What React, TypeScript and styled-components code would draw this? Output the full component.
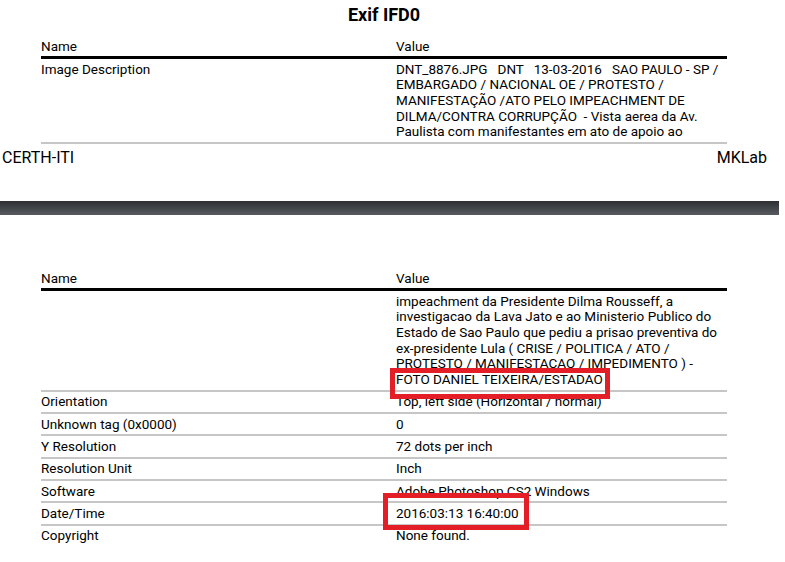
import styled, { createGlobalStyle } from 'styled-components';

const GlobalStyle = createGlobalStyle`
  html, body {
    margin: 0;
    padding: 0;
    background: #ffffff;
  }
  body {
    font-family: Roboto, 'Noto Sans', Arial, sans-serif;
    color: #000;
  }
`;

type Row = { name: string; value: string[] };

const pageOneRows: Row[] = [
  {
    name: 'Image Description',
    value: [
      'DNT_8876.JPG   DNT   13-03-2016   SAO PAULO - SP /',
      'EMBARGADO / NACIONAL OE / PROTESTO /',
      'MANIFESTAÇÃO /ATO PELO IMPEACHMENT DE',
      'DILMA/CONTRA CORRUPÇÃO  - Vista aerea da Av.',
      'Paulista com manifestantes em ato de apoio ao',
    ],
  },
];

const pageTwoRows: Row[] = [
  {
    name: '',
    value: [
      'impeachment da Presidente Dilma Rousseff, a',
      'investigacao da Lava Jato e ao Ministerio Publico do',
      'Estado de Sao Paulo que pediu a prisao preventiva do',
      'ex-presidente Lula ( CRISE / POLITICA / ATO /',
      'PROTESTO / MANIFESTACAO / IMPEDIMENTO ) -',
      'FOTO DANIEL TEIXEIRA/ESTADAO',
    ],
  },
  { name: 'Orientation', value: ['Top, left side (Horizontal / normal)'] },
  { name: 'Unknown tag (0x0000)', value: ['0'] },
  { name: 'Y Resolution', value: ['72 dots per inch'] },
  { name: 'Resolution Unit', value: ['Inch'] },
  { name: 'Software', value: ['Adobe Photoshop CS2 Windows'] },
  { name: 'Date/Time', value: ['2016:03:13 16:40:00'] },
  { name: 'Copyright', value: ['None found.'] },
];

// red annotation boxes, coordinates relative to the second page
const marks = [
  { x: 390, y: 153, w: 220, h: 31 },
  { x: 383, y: 278, w: 146, h: 37 },
];

const ExifTable = ({ rows, top }: { rows: Row[]; top: number }) => (
  <Table $top={top}>
    <TableRow $head>
      <NameCell>Name</NameCell>
      <ValueCell>Value</ValueCell>
    </TableRow>
    {rows.map((row, i) => (
      <TableRow key={i} $last={i === rows.length - 1 && rows.length > 1}>
        <NameCell>{row.name}</NameCell>
        <ValueCell>
          {row.value.map((line, j) => (
            <Line key={j}>{line}</Line>
          ))}
        </ValueCell>
      </TableRow>
    ))}
  </Table>
);

const App = () => {
  return (
    <Viewer>
      <GlobalStyle />
      <PageOne>
        <Title>Exif IFD0</Title>
        <ExifTable rows={pageOneRows} top={13} />
        <Footer>
          <span>CERTH-ITI</span>
          <span>MKLab</span>
        </Footer>
      </PageOne>
      <PageGap />
      <PageTwo>
        <ExifTable rows={pageTwoRows} top={55.6} />
        {marks.map((m, i) => (
          <Mark key={i} $x={m.x} $y={m.y} $w={m.w} $h={m.h} />
        ))}
      </PageTwo>
    </Viewer>
  );
};

const Viewer = styled.div`
  width: 785px;
  height: 562px;
  overflow: hidden;
  background: #fff;
`;

const PageOne = styled.div`
  height: 201px;
  overflow: hidden;
  display: flex;
  flex-direction: column;
`;

const Title = styled.div`
  width: 686px;
  margin: 4px 0 0 41px;
  text-align: center;
  font-size: 18px;
  line-height: 21.6px;
  font-weight: 700;
  color: #000;
`;

const Table = styled.div<{ $top: number }>`
  width: 686px;
  margin: ${(p) => p.$top}px 0 0 41px;
  display: flex;
  flex-direction: column;
  font-size: 13.5px;
  line-height: 15.6px;
`;

const TableRow = styled.div<{ $head?: boolean; $last?: boolean }>`
  display: flex;
  padding: ${(p) => (p.$head ? '0 0 2px' : '2.6px 0 2.2px')};
  border-bottom: ${(p) =>
    p.$head ? '3px solid #000' : p.$last ? 'none' : '2px solid #c6c6c6'};
`;

const NameCell = styled.div`
  width: 355px;
  flex-shrink: 0;
  white-space: pre;
`;

const ValueCell = styled.div`
  flex: 1;
  display: flex;
  flex-direction: column;
`;

const Line = styled.div`
  white-space: pre;
`;

const Footer = styled.div`
  display: flex;
  justify-content: space-between;
  margin-top: 4px;
  padding: 0 18px 0 2px;
  font-size: 16px;
  line-height: 19.2px;
  color: #000;
`;

const PageGap = styled.div`
  width: 779px;
  height: 14px;
  background: linear-gradient(#2e3033, #575b5f);
`;

const PageTwo = styled.div`
  position: relative;
  display: flex;
  flex-direction: column;
`;

const Mark = styled.div<{ $x: number; $y: number; $w: number; $h: number }>`
  position: absolute;
  left: ${(p) => p.$x}px;
  top: ${(p) => p.$y}px;
  width: ${(p) => p.$w}px;
  height: ${(p) => p.$h}px;
  box-sizing: border-box;
  border: 5px solid #e41e26;
`;

export default App;
